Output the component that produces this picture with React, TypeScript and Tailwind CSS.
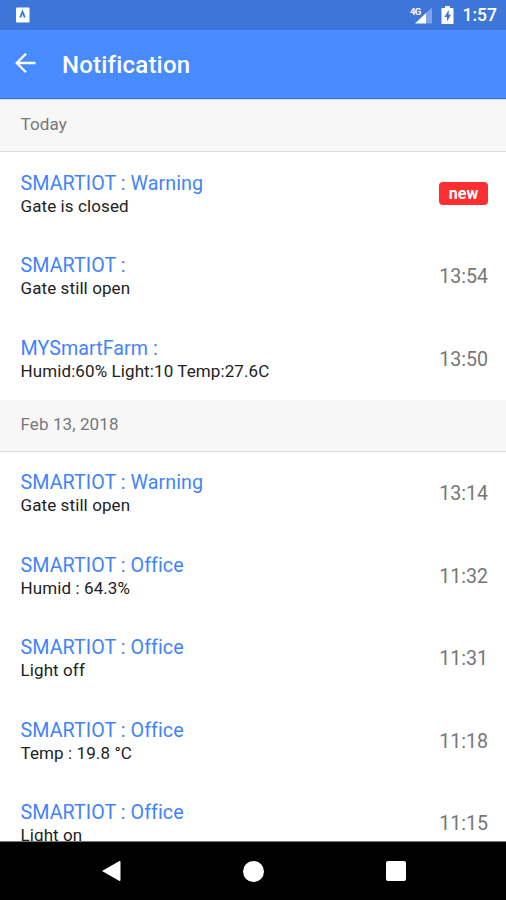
type Item = { title: string; detail: string; time?: string };
type Section = { label: string; items: Item[] };

const sections: Section[] = [
  {
    label: "Today",
    items: [
      { title: "SMARTIOT : Warning", detail: "Gate is closed" },
      { title: "SMARTIOT :", detail: "Gate still open", time: "13:54" },
      { title: "MYSmartFarm :", detail: "Humid:60% Light:10 Temp:27.6C", time: "13:50" },
    ],
  },
  {
    label: "Feb 13, 2018",
    items: [
      { title: "SMARTIOT : Warning", detail: "Gate still open", time: "13:14" },
      { title: "SMARTIOT : Office", detail: "Humid : 64.3%", time: "11:32" },
      { title: "SMARTIOT : Office", detail: "Light off", time: "11:31" },
      { title: "SMARTIOT : Office", detail: "Temp : 19.8 °C", time: "11:18" },
      { title: "SMARTIOT : Office", detail: "Light on", time: "11:15" },
    ],
  },
];

function StatusBar() {
  return (
    <div className="flex h-[30px] shrink-0 items-center bg-[#3e76d8] pl-4 pr-[9px] text-white">
      <svg width="14" height="16" viewBox="0 0 14 16">
        <rect x="0" y="0.5" width="13.5" height="15" rx="1" fill="#fff" />
        <path d="M4.2 10.5 L6.5 4.8 L8.8 10.5" fill="none" stroke="#3e76d8" strokeWidth="1.9" />
      </svg>
      <div className="ml-auto flex items-center">
        <svg width="24" height="20" viewBox="0 0 24 20">
          <path d="M5 18.5 L16 8 V18.5 Z" fill="#fff" />
          <path d="M16 8 L22 2.5 V18.5 H16 Z" fill="#fff" opacity="0.35" />
          <text x="0" y="9.5" fill="#fff" fontSize="9.5" fontWeight="700" fontFamily="Roboto, sans-serif" letterSpacing="-0.7">4G</text>
        </svg>
        <svg className="ml-[7px]" width="13" height="20" viewBox="0 0 13 20">
          <path d="M4 1 H9 V3 H12 Q12.5 3 12.5 3.6 V18.4 Q12.5 19 12 19 H1 Q0.5 19 0.5 18.4 V3.6 Q0.5 3 1 3 H4 Z" fill="#fff" />
          <path d="M7.7 5 L3.4 12 H6 V16.5 L10 9.7 H7.7 Z" fill="#3e76d8" />
        </svg>
        <span className="ml-[9px] mt-[2px] text-[17.5px] font-medium leading-none">1:57</span>
      </div>
    </div>
  );
}

function AppBar() {
  return (
    <div className="flex h-[69px] shrink-0 items-center border-b border-[#3478e8] bg-[#488aff] pl-[15px] text-white">
      <svg className="-mt-[2px]" width="21" height="22" viewBox="0 0 21 22" fill="none" stroke="#fff" strokeWidth="2.3">
        <path d="M20.5 11 H2 M11 1.7 L1.7 11 L11 20.3" />
      </svg>
      <h1 className="ml-[26px] mt-[2px] text-[24px] font-medium leading-none tracking-[0.2px]">Notification</h1>
    </div>
  );
}

function Row({ item }: { item: Item }) {
  return (
    <div className="flex h-[82.5px] shrink-0 items-center pl-[20.5px] pr-[18px]">
      <div className="min-w-0 flex-1">
        <div className="text-[19.7px] leading-[25px] tracking-[0.05px] text-[#3f84fb]">{item.title}</div>
        <div className="text-[17px] leading-[20px] tracking-[0.1px] text-[#222]">{item.detail}</div>
      </div>
      {item.time ? (
        <span className="pt-[2.5px] text-[19.6px] leading-6 text-[#777]">{item.time}</span>
      ) : (
        <span className="mt-[1px] flex h-[23px] w-[49px] items-center justify-center rounded-[4px] bg-[#fa2f2f] text-[16px] font-bold leading-none text-white">
          new
        </span>
      )}
    </div>
  );
}

export default function App() {
  return (
    <div className="flex h-[900px] w-[506px] flex-col overflow-hidden bg-white font-['Roboto',sans-serif]">
      <StatusBar />
      <AppBar />
      <div className="flex min-h-0 flex-1 flex-col overflow-hidden border-y border-b-[#777] border-t-[#dadada]">
        {sections.map((s) => (
          <section key={s.label} className="shrink-0">
            <h2 className="flex h-[52px] items-center border-b border-[#dcdcdc] bg-[#f7f7f7] pb-[1px] pl-[20.5px] text-[17px] tracking-[0.1px] text-[#777]">
              {s.label}
            </h2>
            {s.items.map((item, i) => (
              <Row key={i} item={item} />
            ))}
          </section>
        ))}
      </div>
      <div className="flex h-[58px] shrink-0 items-center justify-between bg-black pl-[101px] pr-[100px]">
        <svg width="20" height="22" viewBox="0 0 20 22">
          <path d="M1 11 L18.5 1 Q19.5 0.7 19.5 2 V20 Q19.5 21.3 18.5 21 Z" fill="#fff" />
        </svg>
        <span className="size-[21px] rounded-full bg-white" />
        <span className="size-[20px] rounded-[2px] bg-white" />
      </div>
    </div>
  );
}
